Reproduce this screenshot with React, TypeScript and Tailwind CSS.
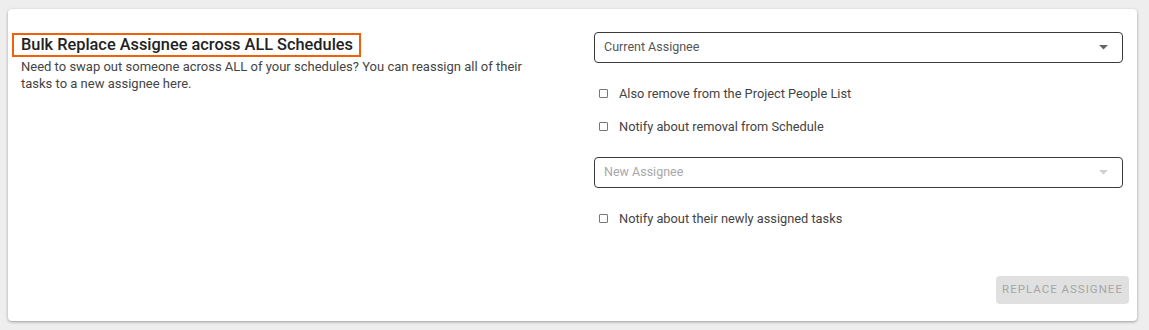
import React from "react";

// ============================================================================
// Bulk Replace Assignee card
// ============================================================================

function Caret({ muted }: { muted?: boolean }) {
  return (
    <svg width="9" height="5" viewBox="0 0 9 5" className="shrink-0">
      <path d="M0 0 L9 0 L4.5 4.5 Z" fill={muted ? "#d0d0d0" : "#666666"} />
    </svg>
  );
}

function SelectBox({ label, muted }: { label: string; muted?: boolean }) {
  return (
    <div className="h-[31px] rounded-[4px] border border-[#3a3a3a] flex items-center justify-between pl-[9px] pr-[14px]">
      <span className={`text-[12.5px] ${muted ? "text-[#a8a8a8]" : "text-[#555555]"}`}>{label}</span>
      <Caret muted={muted} />
    </div>
  );
}

function CheckRow({ label }: { label: string }) {
  return (
    <label className="flex items-center h-[17px] pl-[5px]">
      <span className="w-[9px] h-[9px] border border-[#777777] rounded-[1px] bg-white shrink-0" />
      <span className="ml-[11px] text-[12.8px] text-[#444444]">{label}</span>
    </label>
  );
}

export default function App() {
  return (
    <div
      className="w-[1149px] h-[330px] bg-[#eeeeee] pt-[9px] pl-[8px] pr-[12px]"
      style={{ fontFamily: "Roboto, 'Liberation Sans', sans-serif" }}
    >
      <div className="w-[1129px] h-[312px] bg-white rounded-[4px] shadow-[0_1px_3px_rgba(0,0,0,0.35)] flex flex-col pl-[4px] pr-[8px] pt-[24px] pb-[17px]">
        <div className="flex flex-1">
          {/* Left column: heading + description */}
          <div className="w-[530px]">
            <div className="inline-flex items-center h-[24px] border-2 border-[#f0600a] pl-[7px] pr-[6px]">
              <h3 className="text-[16.35px] font-medium text-[#222222] leading-none whitespace-nowrap">
                Bulk Replace Assignee across ALL Schedules
              </h3>
            </div>
            <p className="pl-[9px] mt-[1px] text-[13px] leading-[17px] text-[#444444] w-[530px]">
              Need to swap out someone across ALL of your schedules? You can reassign all of their tasks to a new assignee here.
            </p>
          </div>

          {/* Right column: form */}
          <div className="ml-[52px] w-[529px] -mt-[1px]">
            <SelectBox label="Current Assignee" />
            <div className="mt-[22px] flex flex-col gap-[16px]">
              <CheckRow label="Also remove from the Project People List" />
              <CheckRow label="Notify about removal from Schedule" />
            </div>
            <div className="mt-[22px]">
              <SelectBox label="New Assignee" muted />
            </div>
            <div className="mt-[22px]">
              <CheckRow label="Notify about their newly assigned tasks" />
            </div>
          </div>
        </div>

        <div className="flex justify-end">
          <button
            disabled
            className="h-[28px] w-[133px] rounded-[4px] bg-[#e0e0e0] text-[#a6a6a6] text-[11.5px] font-normal uppercase tracking-[1px] whitespace-nowrap flex items-center justify-center"
          >
            Replace Assignee
          </button>
        </div>
      </div>
    </div>
  );
}
